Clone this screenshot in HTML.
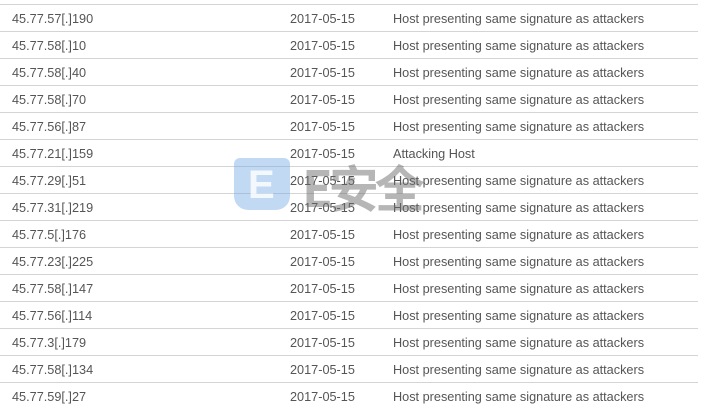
<!DOCTYPE html>
<html><head><meta charset="utf-8"><style>
body{margin:0;width:720px;height:418px;background:#fff;overflow:hidden;position:relative;font-family:"Liberation Sans",Arial,sans-serif;font-size:12.7px;color:#555}
.r{position:absolute;left:0;width:698px;height:27px;border-top:1px solid #d4d4d4}
.r span{position:absolute;top:7px;white-space:nowrap}
.a{left:12px}.b{left:290px}.c{left:393px}
.wm{position:absolute;left:234px;top:158px;width:56px;height:52px;background:rgba(120,170,230,.45);border-radius:6px 6px 14px 14px}
.wm b{position:absolute;left:14px;top:5px;font:bold 40px "Liberation Sans",sans-serif;color:rgba(255,255,255,.8)}
.wt{position:absolute;left:302px;top:158px;font:bold 50px "Noto Sans CJK SC",sans-serif;color:rgba(110,110,110,.5);letter-spacing:-4px;line-height:56px}
</style></head><body>
<div id="t"></div>
<script>
var d=[["45.77.57[.]190",1],["45.77.58[.]10",1],["45.77.58[.]40",1],["45.77.58[.]70",1],["45.77.56[.]87",1],["45.77.21[.]159",0],["45.77.29[.]51",1],["45.77.31[.]219",1],["45.77.5[.]176",1],["45.77.23[.]225",1],["45.77.58[.]147",1],["45.77.56[.]114",1],["45.77.3[.]179",1],["45.77.58[.]134",1],["45.77.59[.]27",1]];
var h="";d.forEach(function(x,i){h+='<div class="r" style="top:'+(4+27*i)+'px"><span class="a">'+x[0]+'</span><span class="b">2017-05-15</span><span class="c">'+(x[1]?'Host presenting same signature as attackers':'Attacking Host')+'</span></div>';});
h+='<div class="r" style="top:382px;height:0"></div>';
document.getElementById('t').innerHTML=h;
</script>
<div class="wm"><b>E</b></div>
<div class="wt">E安全</div>
</body></html>
